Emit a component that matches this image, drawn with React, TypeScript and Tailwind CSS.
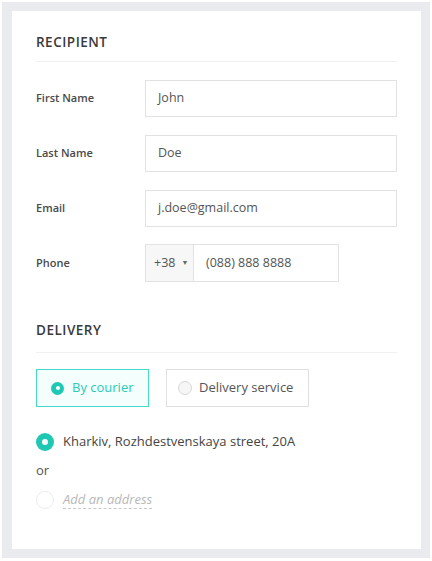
import React from 'react';

const font = { fontFamily: '"Open Sans", "Liberation Sans", sans-serif' };

function Field({ label, value }: { label: string; value: string }) {
  return (
    <div className="flex items-center">
      <div className="w-[109px] text-[11px] font-semibold text-[#4a4a4a]">{label}</div>
      <div className="flex h-[37px] w-[252px] items-center border border-[#e2e2e2] bg-white px-[12px] text-[12.5px] text-[#555]">
        {value}
      </div>
    </div>
  );
}

function Radio({ checked, size = 18, dot = 6, faded = false }: { checked: boolean; size?: number; dot?: number; faded?: boolean }) {
  return (
    <span
      className={
        'flex shrink-0 items-center justify-center rounded-full ' +
        (checked ? 'bg-[#1ec8b3]' : faded ? 'border border-[#ececec] bg-white' : 'border border-[#d8d8d8] bg-[#f6f6f6]')
      }
      style={{ width: size, height: size }}
    >
      {checked && <span className="rounded-full bg-white" style={{ width: dot, height: dot }} />}
    </span>
  );
}

export default function App() {
  return (
    <div className="h-[561px] w-[432px] bg-white p-[2px]" style={font}>
      <div className="h-[556px] bg-[#e9ebee] pl-[10px] pr-[9px] pt-[9px]">
        <div className="h-[538px] bg-white px-[24px] pt-[23px]">
          {/* Recipient */}
          <h2 className="text-[13.5px] font-semibold uppercase leading-[16px] tracking-[0.5px] text-[#3a3a3a]">Recipient</h2>
          <div className="mt-[11px] border-t border-[#f0f0f0]" />
          <div className="mt-[18px] flex flex-col gap-[18px]">
            <Field label="First Name" value="John" />
            <Field label="Last Name" value="Doe" />
            <Field label="Email" value="j.doe@gmail.com" />
            <div className="-mt-[1px] flex items-center">
              <div className="w-[109px] text-[11px] font-semibold text-[#4a4a4a]">Phone</div>
              <div className="flex h-[38px] w-[194px] border border-[#e2e2e2] text-[12.5px] text-[#555]">
                <div className="flex w-[48px] items-center gap-[6px] border-r border-[#e2e2e2] bg-[#f7f7f7] pl-[8px]">
                  <span>+38</span>
                  <span className="text-[7px] text-[#666]">▼</span>
                </div>
                <div className="flex items-center pl-[12px]">(088) 888 8888</div>
              </div>
            </div>
          </div>

          {/* Delivery */}
          <h2 className="mt-[40px] text-[13.5px] font-semibold uppercase leading-[16px] tracking-[0.5px] text-[#3a3a3a]">Delivery</h2>
          <div className="mt-[14px] border-t border-[#f0f0f0]" />
          <div className="mt-[16px] flex gap-[17px]">
            <div className="flex h-[38px] w-[113px] items-center gap-[8px] border border-[#45dac9] bg-[#f4fffd] pl-[14px] text-[13px] text-[#2cc9b6]">
              <Radio checked size={13} dot={4} />
              <span>By courier</span>
            </div>
            <div className="flex h-[38px] w-[143px] items-center gap-[7px] border border-[#e0e0e0] bg-white pl-[11px] text-[13px] text-[#555]">
              <Radio checked={false} size={14} />
              <span>Delivery service</span>
            </div>
          </div>

          <div className="mt-[25px] flex items-center gap-[9px]">
            <Radio checked />
            <span className="text-[13px] text-[#444]">Kharkiv, Rozhdestvenskaya street, 20A</span>
          </div>
          <div className="mt-[9px] text-[13px] text-[#555]">or</div>
          <div className="mt-[11px] flex items-center gap-[9px]">
            <Radio checked={false} faded />
            <span className="border-b border-dashed border-[#c8c8c8] text-[13px] italic leading-[17px] text-[#b8b8b8]">Add an address</span>
          </div>
        </div>
      </div>
    </div>
  );
}
